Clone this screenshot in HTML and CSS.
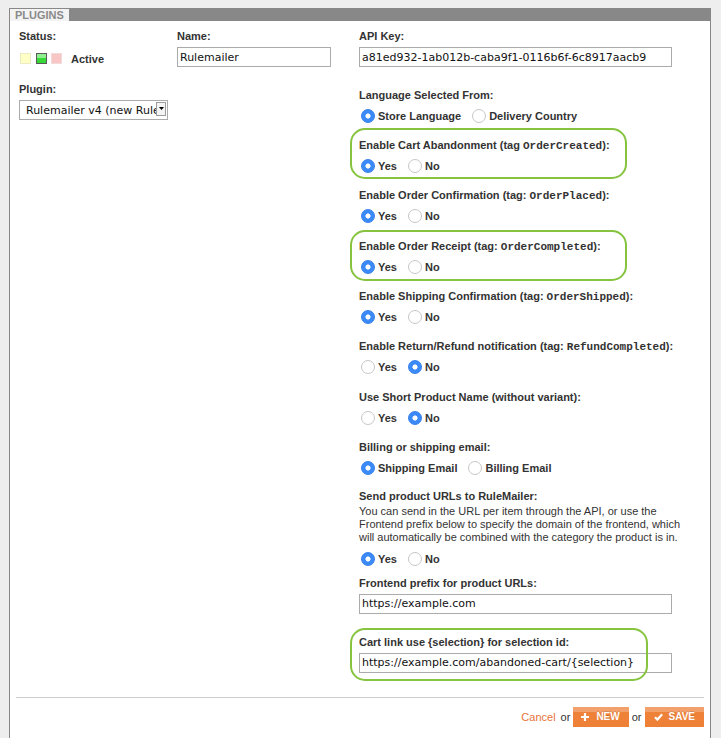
FILE: index.html
```html
<!DOCTYPE html>
<html>
<head>
<meta charset="utf-8">
<title>Plugins</title>
<link rel="stylesheet" href="styles.css">
</head>
<body>
<div class="panel">
  <div class="panel-head"><span class="tab">PLUGINS</span></div>
  <div class="panel-body">
    <div class="col-left">
      <div class="row-top">
        <div class="field field-status">
          <div class="label">Status:</div>
          <div class="status-row">
            <span class="sq sq-yellow"></span><span class="sq sq-green"></span><span class="sq sq-red"></span><span class="status-text">Active</span>
          </div>
        </div>
        <div class="field">
          <div class="label">Name:</div>
          <input class="input input-name" type="text" value="Rulemailer">
        </div>
      </div>
      <div class="field field-plugin">
        <div class="label">Plugin:</div>
        <div class="select-wrap">
          <select class="select">
            <option>Rulemailer v4 (new RuleMailer API)</option>
          </select>
          <span class="select-btn"><svg width="5" height="3" viewBox="0 0 5 3"><path d="M0 0H5L2.5 3Z" fill="#000"/></svg></span>
        </div>
      </div>
    </div>

    <div class="col-right">
      <div class="field">
        <div class="label">API Key:</div>
        <input class="input input-wide" type="text" value="a81ed932-1ab012b-caba9f1-0116b6f-6c8917aacb9">
      </div>

      <div class="field f-lang">
        <div class="label">Language Selected From:</div>
        <div class="radios">
          <label class="opt"><span class="radio on"></span>Store Language</label>
          <label class="opt"><span class="radio"></span>Delivery Country</label>
        </div>
      </div>

      <div class="field f-first hl">
        <div class="label">Enable Cart Abandonment (tag <code class="tag">OrderCreated</code>):</div>
        <div class="radios">
          <label class="opt"><span class="radio on"></span>Yes</label>
          <label class="opt"><span class="radio"></span>No</label>
        </div>
      </div>

      <div class="field f-next">
        <div class="label">Enable Order Confirmation (tag: <code class="tag">OrderPlaced</code>):</div>
        <div class="radios">
          <label class="opt"><span class="radio on"></span>Yes</label>
          <label class="opt"><span class="radio"></span>No</label>
        </div>
      </div>

      <div class="field f-next hl hl-b">
        <div class="label">Enable Order Receipt (tag: <code class="tag">OrderCompleted</code>):</div>
        <div class="radios">
          <label class="opt"><span class="radio on"></span>Yes</label>
          <label class="opt"><span class="radio"></span>No</label>
        </div>
      </div>

      <div class="field f-next">
        <div class="label">Enable Shipping Confirmation (tag: <code class="tag">OrderShipped</code>):</div>
        <div class="radios">
          <label class="opt"><span class="radio on"></span>Yes</label>
          <label class="opt"><span class="radio"></span>No</label>
        </div>
      </div>

      <div class="field f-next">
        <div class="label">Enable Return/Refund notification (tag: <code class="tag">RefundCompleted</code>):</div>
        <div class="radios">
          <label class="opt"><span class="radio"></span>Yes</label>
          <label class="opt"><span class="radio on"></span>No</label>
        </div>
      </div>

      <div class="field f-next">
        <div class="label">Use Short Product Name (without variant):</div>
        <div class="radios">
          <label class="opt"><span class="radio"></span>Yes</label>
          <label class="opt"><span class="radio on"></span>No</label>
        </div>
      </div>

      <div class="field f-next">
        <div class="label">Billing or shipping email:</div>
        <div class="radios">
          <label class="opt"><span class="radio on"></span>Shipping Email</label>
          <label class="opt"><span class="radio"></span>Billing Email</label>
        </div>
      </div>

      <div class="field f-send">
        <div class="label">Send product URLs to RuleMailer:</div>
        <p class="desc">You can send in the URL per item through the API, or use the Frontend prefix below to specify the domain of the frontend, which will automatically be combined with the category the product is in.</p>
        <div class="radios radios-desc">
          <label class="opt"><span class="radio on"></span>Yes</label>
          <label class="opt"><span class="radio"></span>No</label>
        </div>
      </div>

      <div class="field f-prefix">
        <div class="label">Frontend prefix for product URLs:</div>
        <input class="input input-wide" type="text" value="https://example.com">
      </div>

      <div class="field f-cart hl hl-c">
        <div class="label">Cart link use {selection} for selection id:</div>
        <input class="input input-wide" type="text" value="https://example.com/abandoned-cart/{selection}">
      </div>
    </div>
  </div>

  <div class="sep"></div>

  <div class="actions">
    <a class="cancel" href="#">Cancel</a>
    <span class="or">or</span>
    <button class="btn" type="button">
      <svg width="8" height="8" viewBox="0 0 8 8"><path d="M4 0V8M0 4H8" stroke="#fff" stroke-width="2.2"/></svg>
      <span>NEW</span>
    </button>
    <span class="or">or</span>
    <button class="btn btn-save" type="button">
      <svg width="9" height="8" viewBox="0 0 9 8"><path d="M1 4.2L3.4 6.6L8.2 1.2" stroke="#fff" stroke-width="2.2" fill="none"/></svg>
      <span>SAVE</span>
    </button>
  </div>
</div>
</body>
</html>
```

FILE: styles.css
```css
html, body {
  margin: 0;
  padding: 0;
  background: #eeeeee;
}

body {
  font-family: "Liberation Sans", Arial, sans-serif;
  font-size: 11px;
  color: #333333;
  overflow: hidden;
}

.panel {
  margin: 8px 0 0 9px;
  width: 702px;
  box-sizing: border-box;
  background: #ffffff;
  border-left: 1px solid #888888;
  border-right: 1px solid #888888;
  padding-bottom: 40px;
}

.panel-head {
  height: 13px;
  background: #888888;
  display: flex;
  align-items: flex-end;
}

.tab {
  height: 12px;
  line-height: 13px;
  padding: 0 5px;
  background: #f3f3f3;
  color: #8a8a8a;
  font-weight: bold;
  font-size: 11px;
}

.panel-body {
  display: flex;
  padding: 8px 0 0 9px;
}

.col-left {
  width: 340px;
  flex: none;
}

.col-right {
  flex: 1;
}

.row-top {
  display: flex;
}

.field-status {
  width: 158px;
  flex: none;
}

.field {
  position: relative;
}

.label {
  height: 14px;
  overflow: visible;
  font-weight: bold;
  font-size: 11px;
  line-height: 14px;
  color: #333333;
  white-space: nowrap;
}

.tag {
  font-family: "Liberation Mono", "Courier New", monospace;
  font-weight: bold;
  font-size: 11px;
  line-height: 1;
}

.input {
  display: block;
  box-sizing: border-box;
  height: 20px;
  margin: 4px 0 0;
  padding: 0 2px;
  border: 1px solid #ababab;
  background: #ffffff;
  font-family: "DejaVu Sans", Verdana, sans-serif;
  font-size: 11px;
  color: #111111;
  outline: none;
}

.input-name {
  width: 154px;
}

.input-wide {
  width: 313px;
}

.status-row {
  display: flex;
  align-items: center;
  height: 20px;
  margin-top: 4px;
  padding-top: 3px;
  box-sizing: border-box;
}

.sq {
  width: 11px;
  height: 11px;
  box-sizing: border-box;
  margin-right: 4.5px;
  flex: none;
}

.sq-yellow {
  margin-left: 1px;
  background: #ffffc6;
  border: 1px solid #ececc4;
}

.sq-green {
  border: 1px solid #5a5a5a;
  background: linear-gradient(#8ef08e 0, #8ef08e 40%, #3ada3a 40%, #36d636 100%);
}

.sq-red {
  background: #f9c6c6;
  border: 1px solid #f2dada;
}

.status-text {
  margin-left: 4.5px;
  font-weight: bold;
  line-height: 14px;
}

.field-plugin {
  margin-top: 15px;
}

.select-wrap {
  position: relative;
  width: 149px;
  height: 20px;
  margin-top: 4px;
}

.select {
  display: block;
  box-sizing: border-box;
  width: 149px;
  height: 20px;
  margin: 0;
  padding: 0 11px 0 6px;
  border: 1px solid #ababab;
  border-radius: 0;
  appearance: none;
  -webkit-appearance: none;
  background: #ffffff;
  font-family: "DejaVu Sans", Verdana, sans-serif;
  font-size: 11px;
  color: #111111;
  outline: none;
}

.select-btn {
  position: absolute;
  right: 2px;
  top: 2px;
  width: 10px;
  height: 14px;
  box-sizing: border-box;
  border: 1px solid #9c9c9c;
  background: #f4f4f4;
  display: flex;
  justify-content: center;
  padding-top: 4px;
  pointer-events: none;
}

.select-btn svg {
  display: block;
}

.radios {
  display: flex;
  align-items: center;
  gap: 9px;
  height: 14px;
  margin-top: 7px;
}

.opt {
  display: flex;
  align-items: center;
  height: 14px;
  font-weight: bold;
  font-size: 11px;
  line-height: 14px;
  color: #333333;
}

.radio {
  width: 14px;
  height: 14px;
  box-sizing: border-box;
  border-radius: 50%;
  margin: 0 3px 0 2px;
  border: 1px solid #c7c7c7;
  background: #ffffff;
  flex: none;
}

.radio.on {
  border-color: #3580ec;
  background: radial-gradient(circle, #ffffff 0, #ffffff 2.2px, #3b8af7 2.9px);
}

.f-lang {
  margin-top: 21px;
}

.f-first {
  margin-top: 15px;
}

.f-next {
  margin-top: 15.33px;
}

.f-send {
  margin-top: 14px;
}

.desc {
  margin: 2px 0 0;
  font-size: 11px;
  line-height: 13px;
  color: #333333;
  width: 330px;
}

.radios-desc {
  margin-top: 8px;
}

.f-prefix {
  margin-top: 10px;
}

.f-cart {
  margin-top: 20.7px;
}

.hl::after {
  content: "";
  position: absolute;
  left: -9px;
  top: -10px;
  width: 277px;
  height: 51px;
  box-sizing: border-box;
  border: 2px solid #86c440;
  border-radius: 15px;
  pointer-events: none;
}

.hl-b::after {
  top: -9px;
}

.hl-c::after {
  top: -7px;
  width: 298px;
  height: 53px;
}

.sep {
  margin: 24px 6px 0;
  height: 1px;
  background: #cccccc;
}

.actions {
  display: flex;
  justify-content: flex-end;
  align-items: center;
  margin-top: 9px;
  padding-right: 6px;
}

.cancel {
  color: #e8733a;
  text-decoration: none;
  font-size: 11px;
  margin-right: 5px;
}

.or {
  font-size: 11px;
  color: #333333;
  margin-right: 3px;
}

.btn + .or {
  margin-left: 3px;
}

.btn {
  display: flex;
  align-items: center;
  gap: 7px;
  height: 20px;
  box-sizing: border-box;
  padding: 0 9px 0 8px;
  border: 0;
  margin: 0;
  background: linear-gradient(#f2a16d 0, #f2a16d 5px, #ef8239 5px, #ee8036 100%);
  color: #ffffff;
  font-family: "Liberation Sans", Arial, sans-serif;
  font-weight: bold;
  font-size: 10px;
  text-shadow: 0 -1px 0 rgba(0, 0, 0, 0.12);
  cursor: pointer;
}

.btn svg {
  display: block;
  flex: none;
}

.btn-save {
  gap: 6px;
  padding-left: 9px;
}
```
